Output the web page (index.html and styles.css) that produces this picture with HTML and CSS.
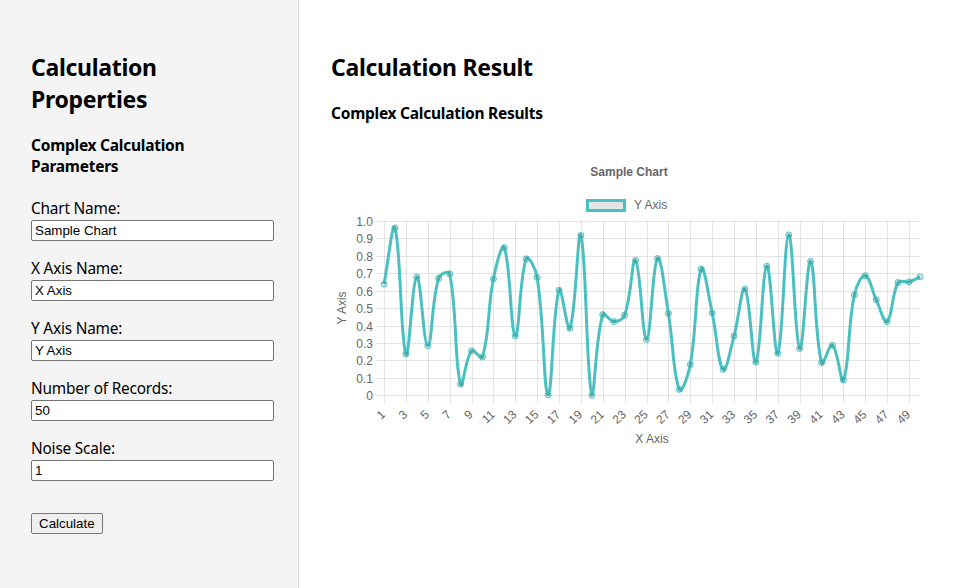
FILE: index.html
```html
<!DOCTYPE html>
<html lang="en">
<head>
<meta charset="utf-8">
<title>Calculation</title>
<link rel="stylesheet" href="styles.css">
</head>
<body>
<div class="layout">
  <aside class="sidebar">
    <h1 class="title">Calculation Properties</h1>
    <h2 class="subtitle">Complex Calculation Parameters</h2>
    <form class="form">
      <div class="field">
        <label class="label" for="chartName">Chart Name:</label>
        <input class="input" id="chartName" type="text" value="Sample Chart">
      </div>
      <div class="field">
        <label class="label" for="xName">X Axis Name:</label>
        <input class="input" id="xName" type="text" value="X Axis">
      </div>
      <div class="field">
        <label class="label" for="yName">Y Axis Name:</label>
        <input class="input" id="yName" type="text" value="Y Axis">
      </div>
      <div class="field">
        <label class="label" for="records">Number of Records:</label>
        <input class="input" id="records" type="text" value="50">
      </div>
      <div class="field">
        <label class="label" for="noise">Noise Scale:</label>
        <input class="input" id="noise" type="text" value="1">
      </div>
      <button class="button" type="button">Calculate</button>
    </form>
  </aside>
  <main class="main">
    <h1 class="title">Calculation Result</h1>
    <h2 class="subtitle subtitle-main">Complex Calculation Results</h2>
    <div class="chart-wrap">
      <svg id="chart" class="chart" width="596" height="300" viewBox="0 0 596 300"></svg>
    </div>
  </main>
</div>
<script src="script.js"></script>
</body>
</html>
```

FILE: styles.css
```css
* {
  box-sizing: border-box;
}

html,
body {
  margin: 0;
  height: 100%;
}

body {
  font-family: "Noto Sans", "Open Sans", sans-serif;
  color: #000;
  background: #fff;
}

.layout {
  display: flex;
  min-height: 100vh;
}

.sidebar {
  flex: none;
  width: 299px;
  background: #f4f4f4;
  border-right: 1px solid #dcdcdc;
  padding: 51px 24px 0 31px;
}

.main {
  flex: 1;
  padding: 51px 0 0 32px;
}

.title {
  margin: 0;
  font-size: 23px;
  letter-spacing: -0.3px;
  line-height: 32px;
  font-weight: 700;
}

.subtitle {
  margin: 19.5px 0 21px;
  font-size: 15.5px;
  letter-spacing: -0.25px;
  line-height: 21px;
  font-weight: 700;
}

.subtitle-main {
  margin-bottom: 26.5px;
}

.form {
  margin: 0;
}

.field {
  margin-bottom: 17px;
}

.label {
  display: block;
  font-size: 15.4px;
  letter-spacing: -0.2px;
  line-height: 22px;
}

.input {
  display: block;
  width: 100%;
  height: 21px;
  margin: 0;
  padding: 1px 3px;
  border: 1px solid #767676;
  border-radius: 2px;
  background: #fff;
  font-family: "Liberation Sans", Arial, sans-serif;
  font-size: 13.33px;
  color: #000;
}

.button {
  display: block;
  margin-top: 32.5px;
  height: 21px;
  padding: 1px 7px;
  border: 1px solid #767676;
  border-radius: 2px;
  background: #efefef;
  font-family: "Liberation Sans", Arial, sans-serif;
  font-size: 13.33px;
  color: #000;
}

.chart-wrap {
  width: 596px;
}

.chart {
  display: block;
  font-family: "Liberation Sans", Arial, sans-serif;
  font-size: 12px;
}

.chart .tick,
.chart .axis-title,
.chart .legend-text {
  fill: #666;
}

.chart .chart-title {
  fill: #666;
  font-weight: 700;
}
```

FILE: script.js
```js
(function () {
  var data = [0.638, 0.96, 0.237, 0.678, 0.285, 0.672, 0.697, 0.065, 0.255, 0.22,
    0.667, 0.847, 0.341, 0.783, 0.676, 0.003, 0.603, 0.385, 0.917, 0.0,
    0.463, 0.423, 0.46, 0.774, 0.32, 0.785, 0.47, 0.034, 0.176, 0.724,
    0.473, 0.149, 0.34, 0.609, 0.19, 0.741, 0.241, 0.92, 0.268, 0.768,
    0.187, 0.287, 0.088, 0.576, 0.686, 0.548, 0.423, 0.647, 0.651, 0.68];

  var NS = 'http://www.w3.org/2000/svg';
  var svg = document.getElementById('chart');
  var L = 53, R = 589, T = 71, B = 245.3;
  var n = data.length;
  var step = (R - L) / (n - 1);
  var teal = 'rgb(75,192,192)';

  function xp(i) { return L + i * step; }
  function yp(v) { return B - v * (B - T); }
  function el(tag, attrs, parent) {
    var e = document.createElementNS(NS, tag);
    for (var k in attrs) e.setAttribute(k, attrs[k]);
    (parent || svg).appendChild(e);
    return e;
  }
  function text(str, attrs, parent) {
    var t = el('text', attrs, parent);
    t.textContent = str;
    return t;
  }

  // title + legend
  text('Sample Chart', { x: 298, y: 22, 'text-anchor': 'middle', 'dominant-baseline': 'central', 'class': 'chart-title' });
  el('rect', { x: 256.5, y: 50.5, width: 37, height: 10, fill: 'rgba(0,0,0,0.1)', stroke: teal, 'stroke-width': 3 });
  text('Y Axis', { x: 303, y: 55, 'dominant-baseline': 'central', 'class': 'legend-text' });

  var grid = el('g', { stroke: 'rgba(0,0,0,0.1)', 'stroke-width': 1, fill: 'none' });
  var k, y, x, i;
  for (k = 0; k <= 10; k++) {
    y = Math.round(yp(k / 10)) + 0.5;
    el('line', { x1: L - 8, x2: R, y1: y, y2: y }, grid);
    text(k === 0 ? '0' : (k / 10).toFixed(1), { x: 42, y: y, 'text-anchor': 'end', 'dominant-baseline': 'central', 'class': 'tick' });
  }
  for (i = 0; i < n; i += 2) {
    x = Math.round(xp(i)) + 0.5;
    el('line', { x1: x, x2: x, y1: T, y2: B + 8 }, grid);
    text(String(i + 1), {
      x: 0, y: 0, 'text-anchor': 'end', 'dominant-baseline': 'central', 'class': 'tick',
      transform: 'translate(' + (xp(i) - 0.5) + ',262.5) rotate(-42.7)'
    });
  }

  // axis titles
  text('Y Axis', { x: 0, y: 0, 'text-anchor': 'middle', 'dominant-baseline': 'central', 'class': 'axis-title', transform: 'translate(11,158) rotate(-90)' });
  text('X Axis', { x: 321, y: 289, 'text-anchor': 'middle', 'dominant-baseline': 'central', 'class': 'axis-title' });

  // line (Chart.js style spline, tension 0.4)
  var pts = data.map(function (v, idx) { return { x: xp(idx), y: yp(v) }; });
  var t = 0.4;
  pts.forEach(function (p, idx) {
    var prev = pts[idx - 1] || p;
    var next = pts[idx + 1] || p;
    var d01 = Math.hypot(p.x - prev.x, p.y - prev.y);
    var d12 = Math.hypot(next.x - p.x, next.y - p.y);
    var s01 = d01 / (d01 + d12), s12 = d12 / (d01 + d12);
    if (isNaN(s01)) s01 = 0;
    if (isNaN(s12)) s12 = 0;
    var fa = t * s01, fb = t * s12;
    p.cp1x = p.x - fa * (next.x - prev.x);
    p.cp1y = p.y - fa * (next.y - prev.y);
    p.cp2x = p.x + fb * (next.x - prev.x);
    p.cp2y = p.y + fb * (next.y - prev.y);
  });
  function cap(v, a, b) { return Math.max(Math.min(v, b), a); }
  pts.forEach(function (p, idx) {
    if (idx > 0) { p.cp1x = cap(p.cp1x, L, R); p.cp1y = cap(p.cp1y, T, B); }
    if (idx < n - 1) { p.cp2x = cap(p.cp2x, L, R); p.cp2y = cap(p.cp2y, T, B); }
  });
  var d = 'M' + pts[0].x + ' ' + pts[0].y;
  for (i = 1; i < n; i++) {
    var a = pts[i - 1], b = pts[i];
    d += ' C' + a.cp2x + ' ' + a.cp2y + ' ' + b.cp1x + ' ' + b.cp1y + ' ' + b.x + ' ' + b.y;
  }
  el('path', { d: d, fill: 'none', stroke: teal, 'stroke-width': 3, 'stroke-linejoin': 'round' });

  var dots = el('g', { fill: 'rgba(0,0,0,0.1)', stroke: teal, 'stroke-width': 1 });
  pts.forEach(function (p) { el('circle', { cx: p.x, cy: p.y, r: 3 }, dots); });
})();
```
